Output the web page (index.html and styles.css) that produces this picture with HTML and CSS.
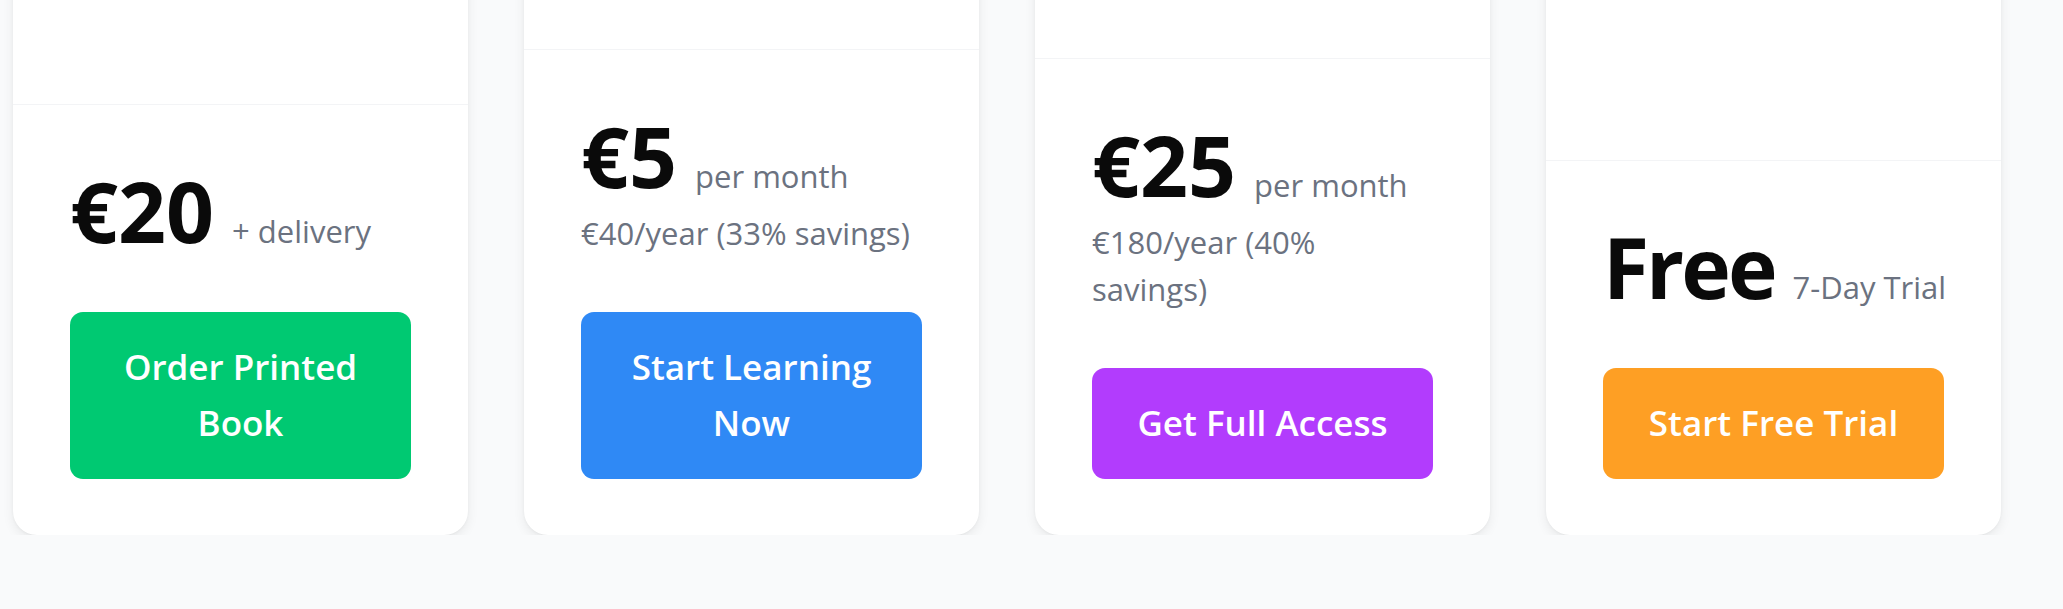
FILE: index.html
```html
<!DOCTYPE html>
<html lang="en">
<head>
<meta charset="utf-8">
<title>Pricing</title>
<link rel="stylesheet" href="styles.css">
</head>
<body>
<main class="pricing">
  <article class="card">
    <div class="card-head"></div>
    <div class="card-foot">
      <div class="price-row"><span class="price">€20</span><span class="suffix">+ delivery</span></div>
      <a class="btn btn-green" href="#">Order Printed Book</a>
    </div>
  </article>
  <article class="card">
    <div class="card-head"></div>
    <div class="card-foot">
      <div class="price-row"><span class="price">€5</span><span class="suffix">per month</span></div>
      <p class="sub">€40/year (33% savings)</p>
      <a class="btn btn-blue" href="#">Start Learning Now</a>
    </div>
  </article>
  <article class="card">
    <div class="card-head"></div>
    <div class="card-foot">
      <div class="price-row"><span class="price">€25</span><span class="suffix">per month</span></div>
      <p class="sub">€180/year (40% savings)</p>
      <a class="btn btn-purple" href="#">Get Full Access</a>
    </div>
  </article>
  <article class="card">
    <div class="card-head"></div>
    <div class="card-foot">
      <div class="price-row"><span class="price price-word">Free</span><span class="suffix">7-Day Trial</span></div>
      <a class="btn btn-orange" href="#">Start Free Trial</a>
    </div>
  </article>
</main>
</body>
</html>
```

FILE: styles.css
```css
* { box-sizing: border-box; }

html, body {
  margin: 0;
  padding: 0;
  background: #f9fafb;
  font-family: "Open Sans", "Noto Sans", sans-serif;
  overflow: hidden;
}

.pricing {
  display: grid;
  grid-template-columns: repeat(4, 455px);
  column-gap: 56px;
  padding-left: 13px;
  margin-top: -51px;
}

.card {
  display: flex;
  flex-direction: column;
  background: #ffffff;
  border-radius: 24px;
  box-shadow: 0 4px 12px rgba(0, 0, 0, 0.07), 0 1px 3px rgba(0, 0, 0, 0.04);
}

.card-head {
  flex: 1;
  min-height: 100px;
}

.card-foot {
  border-top: 1px solid #f3f4f6;
  padding: 60px 57px 56px 57px;
  display: flex;
  flex-direction: column;
}

.price-row {
  display: flex;
  align-items: baseline;
  gap: 18px;
  white-space: nowrap;
}

.price {
  font-size: 84px;
  line-height: 92px;
  font-weight: 700;
  color: #0a0a0a;
  flex: none;
}

.price-word {
  letter-spacing: -3px;
}

.suffix {
  font-size: 31px;
  line-height: 47px;
  color: #6b7280;
  flex: none;
}

.sub {
  margin: 8px 0 0 0;
  font-size: 31px;
  line-height: 47px;
  color: #6b7280;
}

.btn {
  display: block;
  margin-top: 55px;
  padding: 27px 20px 28px;
  border-radius: 13px;
  color: #ffffff;
  text-align: center;
  text-decoration: none;
  font-size: 35px;
  font-weight: 600;
  line-height: 56px;
}

.btn-green { background: #00c972; }
.btn-blue { background: #2f89f5; }
.btn-purple { background: #b23cfd; }
.btn-orange { background: #fe9f24; }
```
